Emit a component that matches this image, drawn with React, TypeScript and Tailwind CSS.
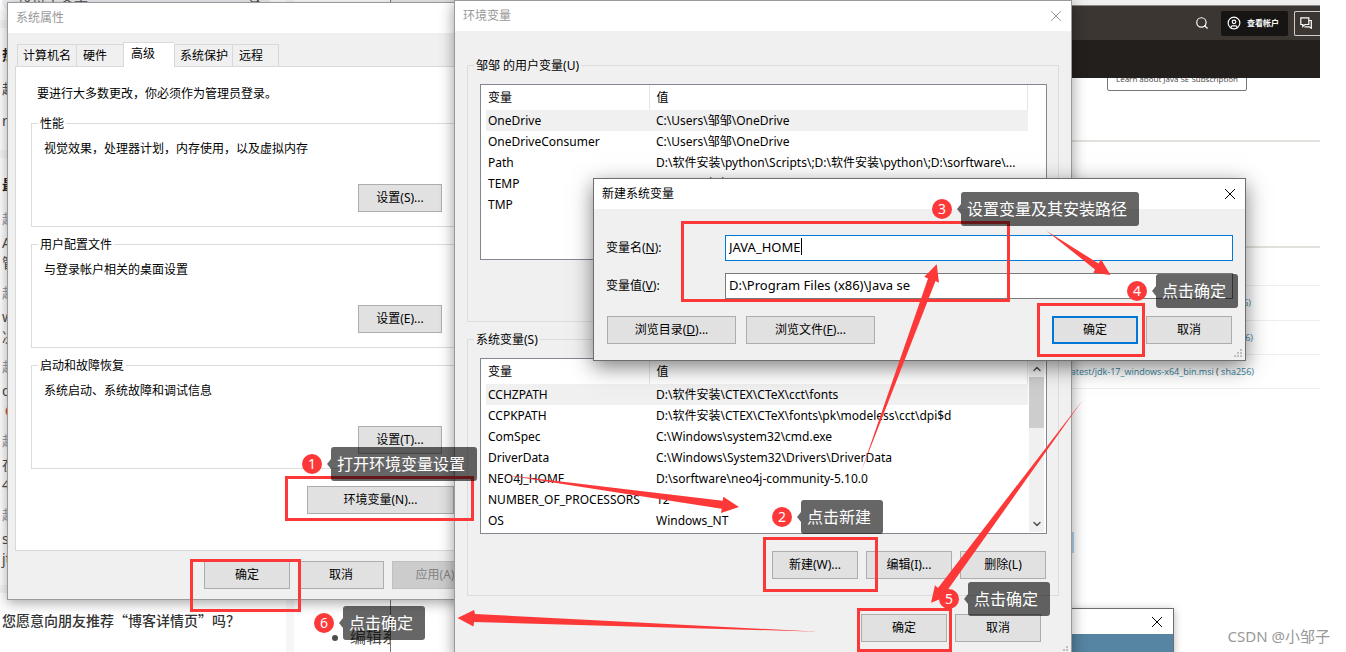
import type { ReactNode } from "react";
import clsx from "clsx";
import { ChevronDown, ChevronUp, CircleUser, Search } from "lucide-react";

type Variable = { name: string; value: string };

const userVariables: Variable[] = [
  { name: "OneDrive", value: "C:\\Users\\邹邹\\OneDrive" },
  { name: "OneDriveConsumer", value: "C:\\Users\\邹邹\\OneDrive" },
  {
    name: "Path",
    value: "D:\\软件安装\\python\\Scripts\\;D:\\软件安装\\python\\;D:\\sorftware\\...",
  },
  { name: "TEMP", value: "C:\\Users\\邹邹\\AppData\\Local\\Temp" },
  { name: "TMP", value: "C:\\Users\\邹邹\\AppData\\Local\\Temp" },
];

const systemVariables: Variable[] = [
  { name: "CCHZPATH", value: "D:\\软件安装\\CTEX\\CTeX\\cct\\fonts" },
  { name: "CCPKPATH", value: "D:\\软件安装\\CTEX\\CTeX\\fonts\\pk\\modeless\\cct\\dpi$d" },
  { name: "ComSpec", value: "C:\\Windows\\system32\\cmd.exe" },
  { name: "DriverData", value: "C:\\Windows\\System32\\Drivers\\DriverData" },
  { name: "NEO4J_HOME", value: "D:\\sorftware\\neo4j-community-5.10.0" },
  { name: "NUMBER_OF_PROCESSORS", value: "12" },
  { name: "OS", value: "Windows_NT" },
];

const CloseIcon = ({ className }: { className?: string }) => (
  <svg viewBox="0 0 12 12" className={clsx("size-3", className)} fill="none" stroke="currentColor">
    <path d="M1 1l10 10M11 1L1 11" />
  </svg>
);

const SizeGrip = () => (
  <svg viewBox="0 0 9 9" className="size-[9px]" fill="#bfbfbf">
    <path d="M6 0h2v2h-2zM3 3h2v2h-2zM6 3h2v2h-2zM0 6h2v2h-2zM3 6h2v2h-2zM6 6h2v2h-2z" />
  </svg>
);

type WinButtonProps = {
  children: ReactNode;
  className?: string;
  primary?: boolean;
  disabled?: boolean;
};

const WinButton = ({ children, className = "w-[86px]", primary, disabled }: WinButtonProps) => (
  <button
    type="button"
    disabled={disabled}
    className={clsx(
      "h-7 shrink-0 whitespace-nowrap",
      primary && "border-2 border-[#0078d7] bg-[#e1e1e1]",
      disabled && "border border-[#bfbfbf] bg-[#cccccc] text-[#838383]",
      !primary && !disabled && "border border-[#adadad] bg-[#e1e1e1]",
      className
    )}
  >
    {children}
  </button>
);

const Group = ({ legend, children }: { legend: string; children: ReactNode }) => (
  <fieldset className="min-w-0 border border-[#dcdcdc]">
    <legend className="ml-1.5 h-4 px-0.5 leading-[18px]">{legend}</legend>
    {children}
  </fieldset>
);

const SettingsGroup = ({ legend, text, hotkey }: { legend: string; text: string; hotkey: string }) => (
  <Group legend={legend}>
    <div className="flex flex-col pt-2.5 pr-[19px] pb-3.5 pl-3">
      <p>{text}</p>
      <WinButton className="mt-[27px] w-[84px] self-end">设置({hotkey})...</WinButton>
    </div>
  </Group>
);

const VariableList = ({ rows, scrollable }: { rows: Variable[]; scrollable?: boolean }) => (
  <div className="flex h-[176px] overflow-hidden border border-[#828790] bg-white pl-[5px]">
    <div className="min-w-0 flex-1">
      <table className="w-full table-fixed text-left">
        <thead>
          <tr className="h-[25px]">
            <th className="w-[163px] border-r border-[#e5e5e5] pl-0.5 font-normal">变量</th>
            <th className="border-r border-[#e5e5e5] pl-[7px] font-normal">值</th>
          </tr>
        </thead>
        <tbody>
          {rows.map((row, i) => (
            <tr key={row.name} className={clsx("h-[21px]", i === 0 && "bg-[#f0f0f0]")}>
              <td className="pl-0.5 whitespace-nowrap">{row.name}</td>
              <td className="overflow-hidden pl-[7px] whitespace-nowrap">{row.value}</td>
            </tr>
          ))}
        </tbody>
      </table>
    </div>
    <div className="flex w-[18px] py-px pl-px">
      {scrollable && (
        <div className="flex w-[15px] flex-col items-center bg-[#f0f0f0] text-[#505050]">
          <ChevronUp className="mt-[3px] size-3" strokeWidth={3} />
          <div className="mt-0.5 h-[51px] w-full bg-[#cdcdcd]" />
          <ChevronDown className="mt-auto mb-0.5 size-3" strokeWidth={3} />
        </div>
      )}
    </div>
  </div>
);

const SystemProperties = () => (
  <section className="absolute top-0.5 left-[7px] w-[479px] border border-[#9a9a9a] bg-[#f0f0f0] shadow-[0_3px_12px_rgba(0,0,0,0.35)]">
    <header className="flex h-[30px] items-center bg-white px-2 text-[#999]">系统属性</header>
    <div className="px-[7px] pt-[9px] pb-2.5">
      <div role="tablist" className="ml-0.5 flex items-end">
        <button role="tab" className="h-[22px] w-[59px] border-t border-l border-[#d9d9d9] pl-[5px] text-left">
          计算机名
        </button>
        <button role="tab" className="h-[22px] w-[47px] border-t border-l border-[#d9d9d9] pl-1.5 text-left">
          硬件
        </button>
        <button
          role="tab"
          aria-selected="true"
          className="relative -mb-px h-[25px] w-[51px] border-t border-l border-[#d9d9d9] bg-white pb-0.5 pl-[7px] text-left"
        >
          高级
        </button>
        <button role="tab" className="h-[22px] w-[58px] border-t border-l border-[#d9d9d9] pl-[5px] text-left">
          系统保护
        </button>
        <button role="tab" className="h-[22px] w-[47px] border-x border-t border-[#d9d9d9] pl-1.5 text-left">
          远程
        </button>
      </div>
      <div className="flex flex-col gap-[9px] border border-[#d9d9d9] bg-white px-[15px] pt-[19px] pb-9">
        <p className="mb-1 pl-1.5">要进行大多数更改，你必须作为管理员登录。</p>
        <SettingsGroup legend="性能" text="视觉效果，处理器计划，内存使用，以及虚拟内存" hotkey="S" />
        <SettingsGroup legend="用户配置文件" text="与登录帐户相关的桌面设置" hotkey="E" />
        <SettingsGroup legend="启动和故障恢复" text="系统启动、系统故障和调试信息" hotkey="T" />
        <WinButton className="mt-2 mr-2 w-[147px] self-end">环境变量(N)...</WinButton>
      </div>
      <div className="mt-2.5 flex justify-end gap-2">
        <WinButton>确定</WinButton>
        <WinButton>取消</WinButton>
        <WinButton disabled>应用(A)</WinButton>
      </div>
    </div>
  </section>
);

const EnvironmentVariables = () => (
  <section className="absolute top-0 left-[454px] w-[618px] border border-[#9a9a9a] bg-[#f0f0f0] shadow-[0_3px_14px_rgba(0,0,0,0.4)]">
    <header className="flex h-[30px] items-center justify-between bg-white pr-[9px] pl-2 text-[#999]">
      环境变量
      <button type="button" aria-label="关闭">
        <CloseIcon />
      </button>
    </header>
    <div className="flex flex-col gap-[9px] px-3 pt-[26px]">
      <Group legend="邹邹 的用户变量(U)">
        <div className="pt-[11px] pr-[11px] pb-[61px] pl-3">
          <VariableList rows={userVariables} />
        </div>
      </Group>
      <Group legend="系统变量(S)">
        <div className="pt-[11px] pr-[11px] pb-4 pl-3">
          <VariableList rows={systemVariables} scrollable />
          <div className="mt-[17px] mr-px flex justify-end gap-2">
            <WinButton>新建(W)...</WinButton>
            <WinButton>编辑(I)...</WinButton>
            <WinButton>删除(L)</WinButton>
          </div>
        </div>
      </Group>
    </div>
    <div className="mt-[18px] flex justify-end gap-2 pr-[30px]">
      <WinButton>确定</WinButton>
      <WinButton>取消</WinButton>
    </div>
    <div className="mt-1 flex justify-end pr-0.5 pb-0.5">
      <SizeGrip />
    </div>
  </section>
);

const NewVariableDialog = () => (
  <section
    role="dialog"
    aria-label="新建系统变量"
    className="absolute top-[178px] left-[593px] w-[653px] border border-[#6e6e6e] bg-[#f0f0f0] shadow-[0_6px_20px_rgba(0,0,0,0.5)]"
  >
    <header className="flex h-[30px] items-center justify-between bg-white pr-[9px] pl-2">
      新建系统变量
      <button type="button" aria-label="关闭">
        <CloseIcon />
      </button>
    </header>
    <div className="px-3 pt-[26px] pb-4">
      <div className="flex items-center">
        <label htmlFor="var-name" className="w-[119px]">
          变量名(<u>N</u>):
        </label>
        <div className="relative flex-1">
          <input
            id="var-name"
            defaultValue="JAVA_HOME"
            className="block h-[26px] w-full border border-[#0078d7] bg-white px-[3px] pb-0.5 text-[13px] outline-none"
          />
          <span className="absolute top-[3px] left-[76px] h-[17px] w-px bg-black" />
        </div>
      </div>
      <div className="mt-3 flex items-center">
        <label htmlFor="var-value" className="w-[119px]">
          变量值(<u>V</u>):
        </label>
        <input
          id="var-value"
          defaultValue="D:\Program Files (x86)\Java se"
          className="block h-[26px] flex-1 border border-[#7a7a7a] bg-white px-[3px] pb-0.5 text-[13px] outline-none"
        />
      </div>
      <div className="mt-[17px] flex">
        <WinButton className="ml-px w-[129px]">
          浏览目录(<u>D</u>)...
        </WinButton>
        <WinButton className="ml-2.5 w-[129px]">
          浏览文件(<u>F</u>)...
        </WinButton>
        <div className="mr-px ml-auto flex gap-2">
          <WinButton primary>确定</WinButton>
          <WinButton>取消</WinButton>
        </div>
      </div>
    </div>
    <div className="absolute right-0.5 bottom-0.5">
      <SizeGrip />
    </div>
  </section>
);

const Blog = () => (
  <div className="flex w-[390px] shrink-0 bg-[#f5f6f7] font-['Noto_Sans','Noto_Sans_CJK_SC',sans-serif] text-sm text-[#4d4d4d]">
    <aside className="flex w-[286px] flex-col gap-2 overflow-hidden whitespace-nowrap">
      <div className="h-5 bg-white pl-0.5">
        <div className="flex h-3 w-[268px] items-end justify-between rounded-b-xl bg-[#ededf2] pr-2 pb-[5px] pl-4">
          <span className="leading-5">搜博主文章</span>
          <Search className="mb-0.5 size-3.5 shrink-0" />
        </div>
      </div>
      <div className="flex h-[122px] flex-col bg-white pt-[17px] pl-0.5">
        <b className="leading-5 text-[#222]">热</b>
        <span className="mt-3.5 leading-5">超</span>
        <span className="mt-3 leading-5">n</span>
      </div>
      <div className="flex h-[427px] flex-col bg-white pt-[17px] pl-0.5">
        <b className="leading-5 text-[#222]">最</b>
        <span className="mt-3.5 leading-5 text-[#999aaa]">超</span>
        <span className="mt-1 leading-5">A</span>
        <span className="leading-5">管</span>
        <span className="mt-2.5 leading-5 text-[#999aaa]">超</span>
        <span className="mt-1 leading-5">w</span>
        <span className="leading-5">决</span>
        <span className="mt-2.5 leading-5 text-[#999aaa]">超</span>
        <span className="mt-1 leading-5">q</span>
        <span className="pl-[3px] leading-5 text-[#f0453a]">●</span>
        <span className="mt-2.5 leading-5 text-[#999aaa]">超</span>
        <span className="mt-1 leading-5">在</span>
        <span className="leading-5">4</span>
        <span className="mt-2.5 leading-5 text-[#999aaa]">超</span>
        <span className="mt-1 leading-5">s</span>
        <span className="leading-5">jt</span>
      </div>
      <div className="flex-1 bg-white pt-[17px] pl-0.5">
        <h3 className="font-['Noto_Sans_CJK_SC',sans-serif] leading-5 font-medium text-[#333]">
          您愿意向朋友推荐“博客详情页”吗？
        </h3>
      </div>
    </aside>
    <article className="ml-2 flex flex-1 flex-col justify-end overflow-hidden bg-white pb-[3px]">
      <ul className="list-disc pl-14 text-base leading-6 whitespace-nowrap">
        <li>编辑系</li>
      </ul>
    </article>
  </div>
);

const DownloadPage = () => (
  <div className="flex min-w-0 flex-1 flex-col overflow-hidden border-l border-[#777] bg-white font-['Open_Sans','Noto_Sans_CJK_SC',sans-serif] text-[9px] leading-3 text-[#33819c]">
    <div className="h-[5px] shrink-0 bg-[#eeeeee]" />
    <div className="flex h-[35px] shrink-0 items-center justify-end overflow-hidden border-t border-[#888] bg-[#3b3632] text-white">
      <Search className="mr-3 size-3.5" strokeWidth={2} />
      <button
        type="button"
        className="flex h-[25px] w-[67px] shrink-0 items-center gap-1.5 rounded-xs bg-[#161513] pl-1.5 text-[8px] font-bold whitespace-nowrap"
      >
        <CircleUser className="size-3.5" />
        查看帐户
      </button>
      <button
        type="button"
        aria-label="联系"
        className="ml-1.5 flex h-[25px] w-[26px] shrink-0 items-center rounded-l-xs border border-r-0 border-[#ccc] pl-[5px]"
      >
        <svg viewBox="0 0 12 12" className="size-3" fill="none" stroke="currentColor" strokeWidth="1.2">
          <path d="M.8.8h8v6.700H5L2.800 9.500V7.500H.8zM9 3.500h2.300V11.300L9.300 9.800H4.500" />
        </svg>
      </button>
    </div>
    <div className="h-[38px] shrink-0 bg-[#231f1c]" />
    <div className="flex h-[64px] shrink-0 items-start justify-end overflow-hidden border-b-2 border-[#e3e1dc] pr-[73px]">
      <button
        type="button"
        className="-mt-3 h-[25px] w-[140px] rounded-xs border border-[#777] text-[8px] whitespace-nowrap text-[#444]"
      >
        Learn about Java SE Subscription
      </button>
    </div>
    <div className="h-[106px] shrink-0 border-b-2 border-[#e3e1dc]" />
    <div className="h-[38px] shrink-0 border-b border-[#eee]" />
    <div className="flex h-[35px] shrink-0 items-center justify-end border-b border-[#eee] pr-[69px]">
      <a href="#sha-zip">6)</a>
    </div>
    <div className="flex h-[34px] shrink-0 items-center justify-end border-b border-[#eee] pr-[67px]">
      <a href="#sha-exe">6)</a>
    </div>
    <div className="flex h-[34px] shrink-0 items-center justify-end border-b border-[#eee] pr-[66px] whitespace-nowrap">
      <a href="#msi">
        latest/jdk-17_windows-x64_bin.msi <span className="text-[#444]">(</span> sha256)
      </a>
    </div>
    <div className="mt-[143px] h-[21px] w-[683px] shrink-0 bg-[#b5d3f0]" />
  </div>
);

const BackWindow = () => (
  <section className="absolute top-[608px] left-[1000px] w-[174px] border border-[#6e6e6e] bg-white shadow-[0_2px_8px_rgba(0,0,0,0.3)]">
    <header className="flex h-[25px] items-center justify-end pr-2.5">
      <button type="button" aria-label="关闭">
        <CloseIcon />
      </button>
    </header>
    <div className="h-5 bg-[#5684a3]" />
  </section>
);

const Callout = ({ step, text, className }: { step: number; text: string; className: string }) => (
  <div className={clsx("absolute flex items-center whitespace-nowrap text-white", className)}>
    <span className="flex size-5 items-center justify-center rounded-full bg-[#fc3838] text-sm leading-5">
      {step}
    </span>
    <svg viewBox="0 0 4 10" className="ml-[5px] h-2.5 w-1" fill="#000" fillOpacity="0.6">
      <path d="M4 0v10L0 5z" />
    </svg>
    <span className="h-[34px] rounded-[3px] bg-black/60 pr-3 pl-1.5 text-base leading-[34px]">{text}</span>
  </div>
);

const Annotations = () => (
  <div className="pointer-events-none absolute inset-0">
    <div className="absolute top-[476px] left-[285px] h-[45px] w-[189px] border-3 border-[#fc3838]" />
    <div className="absolute top-[559px] left-[190px] h-[53px] w-[111px] border-3 border-[#fc3838]" />
    <div className="absolute top-[221px] left-[681px] h-[81px] w-[329px] border-3 border-[#fc3838]" />
    <div className="absolute top-[303px] left-[1037px] h-[54px] w-[108px] border-3 border-[#fc3838]" />
    <div className="absolute top-[537px] left-[763px] h-[55px] w-[115px] border-3 border-[#fc3838]" />
    <div className="absolute top-[608px] left-[857px] h-[44px] w-[95px] border-3 border-[#fc3838]" />
    <svg viewBox="0 0 1346 652" className="absolute top-0 left-0 h-[652px] w-[1346px]" fill="#fc3838">
      <path d="M502 474.500L722.700 500.700L723.300 496.700L739 507L721 513L721.700 508.700Z" />
      <path d="M818 631.700L475 614L474 610L457.500 618L473.500 626.500L474 622Z" />
      <path d="M861.500 470.500L928 278.500L924.300 276.700L936.700 264.300L939 282.700L935.500 281Z" />
      <path d="M1046.700 231L1098.500 263.500L1101 259.300L1110.500 275L1093.300 272.700L1095 269.500Z" />
      <path d="M1082.700 400L938 588L935 585.300L931 602.700L948 596L945.500 593Z" />
    </svg>
    <Callout step={1} text="打开环境变量设置" className="top-[447px] left-[302px]" />
    <Callout step={2} text="点击新建" className="top-[500px] left-[772px]" />
    <Callout step={3} text="设置变量及其安装路径" className="top-[192px] left-[932px]" />
    <Callout step={4} text="点击确定" className="top-[274px] left-[1127px]" />
    <Callout step={5} text="点击确定" className="top-[582px] left-[939px]" />
    <Callout step={6} text="点击确定" className="top-[606px] left-[314px]" />
  </div>
);

const App = () => {
  return (
    <main className="relative flex h-screen overflow-hidden bg-white pr-[26px] font-['Noto_Sans','Noto_Sans_CJK_SC',sans-serif] text-xs leading-4 text-black">
      <Blog />
      <DownloadPage />
      <BackWindow />
      <SystemProperties />
      <EnvironmentVariables />
      <NewVariableDialog />
      <Annotations />
      <span className="absolute right-4 bottom-1.5 text-[15px] leading-5 text-[#999]">CSDN @小邹子</span>
    </main>
  );
};

export default App;
